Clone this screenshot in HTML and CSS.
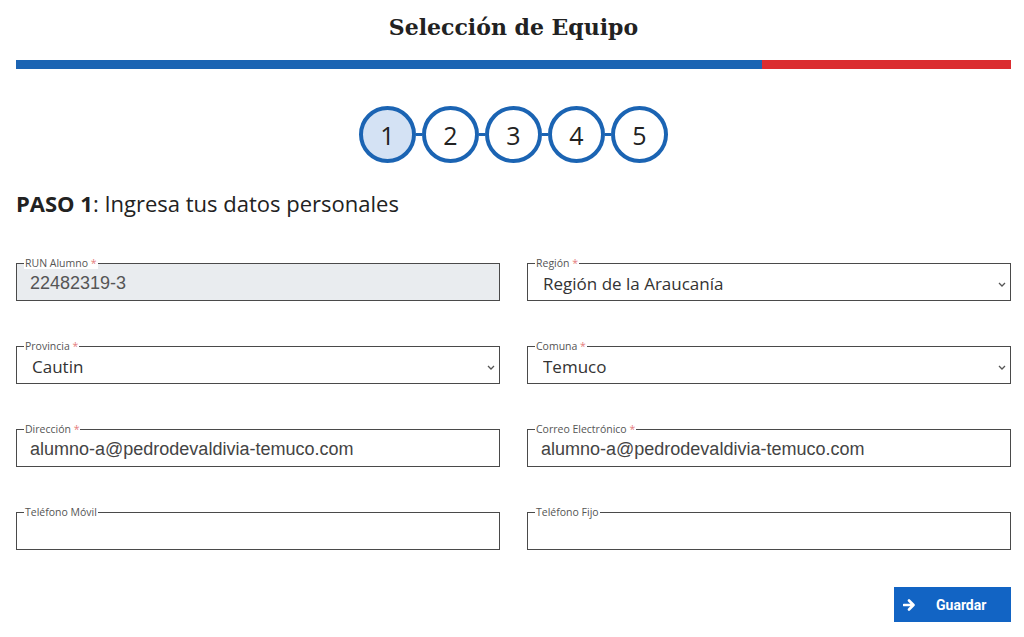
FILE: index.html
```html
<!DOCTYPE html>
<html lang="es">
<head>
    <meta charset="UTF-8">
    <meta name="viewport" content="width=device-width, initial-scale=1.0">
    <title>Selección de Equipo</title>
    <link rel="stylesheet" href="styles.css">
</head>
<body>
    <div class="page">
        <h1 class="page-title">Selección de Equipo</h1>
        <div class="flag-bar">
            <span class="flag-blue"></span>
            <span class="flag-red"></span>
        </div>

        <ol class="steps">
            <li class="step active">1</li>
            <li class="step-link"></li>
            <li class="step">2</li>
            <li class="step-link"></li>
            <li class="step">3</li>
            <li class="step-link"></li>
            <li class="step">4</li>
            <li class="step-link"></li>
            <li class="step">5</li>
        </ol>

        <h2 class="step-title"><strong>PASO 1</strong>: Ingresa tus datos personales</h2>

        <form class="form-grid" onsubmit="return false;">
            <fieldset class="field disabled">
                <legend>RUN Alumno <span class="req">*</span></legend>
                <input type="text" class="mono-value" value="22482319-3" disabled>
            </fieldset>
            <fieldset class="field select-field">
                <legend>Región <span class="req">*</span></legend>
                <select>
                    <option selected>Región de la Araucanía</option>
                </select>
                <svg class="chevron" width="8" height="5" viewBox="0 0 8 5" aria-hidden="true"><path d="M1 1l3 3 3-3" fill="none" stroke="#555" stroke-width="1.3"/></svg>
            </fieldset>

            <fieldset class="field select-field">
                <legend>Provincia <span class="req">*</span></legend>
                <select>
                    <option selected>Cautin</option>
                </select>
                <svg class="chevron" width="8" height="5" viewBox="0 0 8 5" aria-hidden="true"><path d="M1 1l3 3 3-3" fill="none" stroke="#555" stroke-width="1.3"/></svg>
            </fieldset>
            <fieldset class="field select-field">
                <legend>Comuna <span class="req">*</span></legend>
                <select>
                    <option selected>Temuco</option>
                </select>
                <svg class="chevron" width="8" height="5" viewBox="0 0 8 5" aria-hidden="true"><path d="M1 1l3 3 3-3" fill="none" stroke="#555" stroke-width="1.3"/></svg>
            </fieldset>

            <fieldset class="field">
                <legend>Dirección <span class="req">*</span></legend>
                <input type="text" class="mono-value" value="alumno-a@pedrodevaldivia-temuco.com">
            </fieldset>
            <fieldset class="field">
                <legend>Correo Electrónico <span class="req">*</span></legend>
                <input type="text" class="mono-value" value="alumno-a@pedrodevaldivia-temuco.com">
            </fieldset>

            <fieldset class="field">
                <legend>Teléfono Móvil</legend>
                <input type="text" class="mono-value" value="">
            </fieldset>
            <fieldset class="field">
                <legend>Teléfono Fijo</legend>
                <input type="text" class="mono-value" value="">
            </fieldset>
        </form>

        <div class="actions">
            <button type="button" class="btn-save">
                <svg width="13" height="12" viewBox="0 0 13 12" aria-hidden="true">
                    <path d="M1 6h9M6 1.5L10.5 6 6 10.5" fill="none" stroke="#fff" stroke-width="2.6" stroke-linecap="round" stroke-linejoin="round"/>
                </svg>
                <span>Guardar</span>
            </button>
        </div>
    </div>
</body>
</html>
```

FILE: styles.css
```css
body {
    margin: 0;
    font-family: "Open Sans", "Noto Sans", sans-serif;
    color: #222;
    background: #fff;
}
.page {
    padding: 0 13px 0 16px;
}
.page-title {
    margin: 0;
    padding-top: 6px;
    height: 54px;
    line-height: 42px;
    text-align: center;
    font-family: "DejaVu Serif", serif;
    font-size: 22px;
    font-weight: bold;
    color: #222;
}
.flag-bar {
    display: flex;
    height: 9px;
}
.flag-blue {
    flex: 0 0 75%;
    background: #1b64b3;
}
.flag-red {
    flex: 1;
    background: #db2d30;
}
.steps {
    list-style: none;
    margin: 37px 0 0;
    padding: 0;
    display: flex;
    justify-content: center;
    align-items: center;
}
.step {
    box-sizing: border-box;
    width: 57px;
    height: 57px;
    border: 4px solid #1b64b3;
    border-radius: 50%;
    display: flex;
    align-items: center;
    justify-content: center;
    font-size: 25px;
    color: #222;
    background: #fff;
}
.step.active {
    background: #d4e2f4;
}
.step-link {
    width: 6px;
    height: 3px;
    background: #1b64b3;
}
.step-title {
    margin: 26px 0 0;
    font-size: 22px;
    font-weight: normal;
    line-height: 28px;
    color: #222;
}
.step-title strong {
    font-weight: bold;
}
.form-grid {
    margin-top: 40px;
    display: grid;
    grid-template-columns: 1fr 1fr;
    column-gap: 27px;
    row-gap: 39px;
}
.field {
    position: relative;
    margin: 0;
    padding: 0 12px 0 13px;
    border: 1px solid #4a4a4a;
    min-width: 0;
}
.field legend {
    margin-left: -6px;
    padding: 0 1px;
    font-size: 10.5px;
    line-height: 12px;
    color: #555;
}
.field .req {
    color: #e57d7d;
}
.field.disabled {
    background: #e9ecef;
}
.field.disabled legend {
    background: #fff;
}
.field input,
.field select {
    box-sizing: border-box;
    display: block;
    width: 100%;
    height: 31px;
    margin: 0;
    padding: 0 0 3px;
    border: none;
    outline: none;
    background: transparent;
    color: #333;
}
.field input.mono-value {
    font-family: "Liberation Sans", Arial, sans-serif;
    font-size: 18px;
    color: #444;
}
.field input:disabled {
    color: #555;
}
.field select {
    appearance: none;
    -webkit-appearance: none;
    font-family: "Open Sans", "Noto Sans", sans-serif;
    font-size: 17px;
    color: #333;
    padding-left: 2px;
}
.chevron {
    position: absolute;
    right: 4px;
    top: 13px;
}
.actions {
    margin-top: 37px;
    display: flex;
    justify-content: flex-end;
}
.btn-save {
    width: 117px;
    height: 35px;
    border: none;
    background: #1264c4;
    color: #fff;
    font-family: Roboto, sans-serif;
    font-size: 14px;
    font-weight: bold;
    display: flex;
    align-items: center;
    padding: 0 0 0 9px;
    gap: 20px;
    cursor: pointer;
}
```
